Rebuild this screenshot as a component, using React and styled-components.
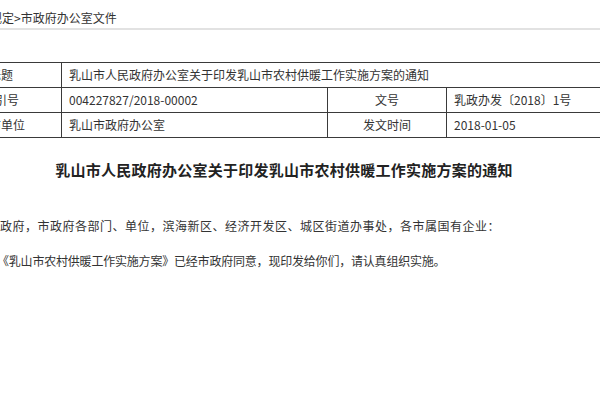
import React from "react";
import styled, { createGlobalStyle } from "styled-components";

const Global = createGlobalStyle`
  html, body { margin: 0; padding: 0; background: #fff; overflow: hidden; }
  body { font-family: "Noto Sans CJK SC", "Noto Sans", sans-serif; color: #333; }
`;

const Page = styled.div`
  margin-left: -60px;
  width: 688px;
`;

const Breadcrumb = styled.div`
  height: 30px;
  box-sizing: border-box;
  padding: 10px 0 0 50px;
  font-size: 12px;
  line-height: 16px;
  color: #333;
  border-bottom: 2px solid #e2e2e2;
  white-space: nowrap;
`;

const InfoTable = styled.table`
  margin-top: 32px;
  width: 100%;
  border-collapse: collapse;
  table-layout: fixed;
  font-size: 12px;
  color: #333;
`;

const Cell = styled.td`
  height: 24px;
  padding: 0 0 0 ${(p) => (p.$label ? "0" : "7px")};
  border: 1px solid #3a3a3a;
  text-align: ${(p) => (p.$label ? "center" : "left")};
  white-space: nowrap;
  overflow: hidden;
  line-height: 16px;
`;

const Title = styled.h1`
  margin: 22px 0 0;
  font-size: 15px;
  line-height: 20px;
  font-weight: bold;
  color: #222;
  text-align: center;
  letter-spacing: 0.25px;
  white-space: nowrap;
`;

const Para = styled.p`
  margin: ${(p) => p.$top}px 0 0;
  padding-left: ${(p) => p.$indent}px;
  font-size: 12px;
  line-height: 20px;
  letter-spacing: ${(p) => p.$spacing}px;
  color: #333;
  white-space: nowrap;
`;

export default function App() {
  return (
    <>
      <Global />
      <Page>
        <Breadcrumb>规定&gt;市政府办公室文件</Breadcrumb>
        <InfoTable>
          <colgroup>
            <col style={{ width: 121 }} />
            <col style={{ width: 266 }} />
            <col style={{ width: 119 }} />
            <col />
          </colgroup>
          <tbody>
            <tr>
              <Cell $label>标题</Cell>
              <Cell colSpan={3}>乳山市人民政府办公室关于印发乳山市农村供暖工作实施方案的通知</Cell>
            </tr>
            <tr>
              <Cell $label>索引号</Cell>
              <Cell>004227827/2018-00002</Cell>
              <Cell $label>文号</Cell>
              <Cell>乳政办发〔2018〕1号</Cell>
            </tr>
            <tr>
              <Cell $label>发布单位</Cell>
              <Cell>乳山市政府办公室</Cell>
              <Cell $label>发文时间</Cell>
              <Cell>2018-01-05</Cell>
            </tr>
          </tbody>
        </InfoTable>
        <Title>乳山市人民政府办公室关于印发乳山市农村供暖工作实施方案的通知</Title>
        <Para $top={36} $indent={60} $spacing={0.5}>
          政府，市政府各部门、单位，滨海新区、经济开发区、城区街道办事处，各市属国有企业：
        </Para>
        <Para $top={15} $indent={57} $spacing={-0.2}>
          《乳山市农村供暖工作实施方案》已经市政府同意，现印发给你们，请认真组织实施。
        </Para>
      </Page>
    </>
  );
}
